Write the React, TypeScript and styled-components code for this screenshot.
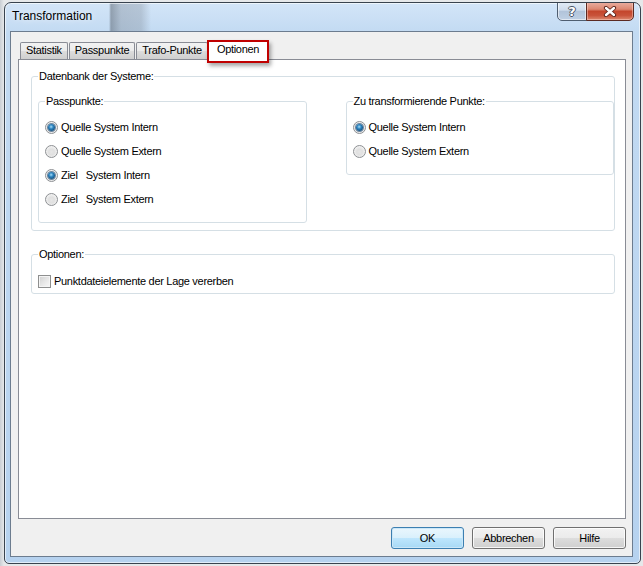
import React from "react";
import styled, { createGlobalStyle, css } from "styled-components";

const Global = createGlobalStyle`
  html, body { margin: 0; padding: 0; }
  body {
    background: #d9dde1;
    font-family: "Liberation Sans", Arial, sans-serif;
    font-size: 11px;
    color: #000;
  }
`;

const Desktop = styled.div`
  width: 643px;
  height: 566px;
  padding: 2px 2px 2px 4px;
  box-sizing: border-box;
  background: linear-gradient(90deg, #c9ced4 0, #e6e8ea 4px);
`;

const Window = styled.div`
  width: 637px;
  height: 562px;
  box-sizing: border-box;
  display: flex;
  flex-direction: column;
  border: 1px solid #39434f;
  border-radius: 7px 7px 5px 5px;
  background:
    linear-gradient(90deg, transparent 104px, rgba(70, 78, 88, 0.45) 106px, rgba(110, 118, 128, 0.32) 116px, rgba(110, 118, 128, 0.28) 136px, transparent 146px) 0 0 / 100% 28px no-repeat,
    linear-gradient(180deg, #d3e5f8 0, #c2daf2 30px, #b6d2ef 100%);
  box-shadow: inset 0 0 0 1px rgba(255, 255, 255, 0.6);
  overflow: hidden;
`;

const TitleBar = styled.div`
  height: 28px;
  flex: none;
  display: flex;
  justify-content: space-between;
  align-items: flex-start;
  padding-left: 7px;
  padding-right: 6px;
`;

const Title = styled.div`
  margin-top: 6px;
  font-size: 12px;
  line-height: 15px;
  color: #000;
  text-shadow: 0 0 6px rgba(255, 255, 255, 0.9);
`;

const Captions = styled.div`
  display: flex;
  margin-top: -2px;
`;

const CaptionButton = styled.div<{ $close?: boolean }>`
  height: 20px;
  box-sizing: border-box;
  display: flex;
  align-items: center;
  justify-content: center;
  border: 1px solid #4f5e70;
  ${(p) =>
    p.$close
      ? css`
          width: 48px;
          margin-left: -1px;
          border-color: #5b2a22;
          border-radius: 0 0 5px 0;
          background: linear-gradient(180deg, #eab0a2 0%, #dc8771 40%, #c4462c 52%, #c9533a 75%, #dc8a70 100%);
          box-shadow: inset 0 0 0 1px rgba(255, 220, 210, 0.45);
        `
      : css`
          width: 30px;
          border-radius: 0 0 0 5px;
          background: linear-gradient(180deg, #e3ecf6 0%, #cfdcec 45%, #b2c4da 52%, #bfd0e4 100%);
          box-shadow: inset 0 0 0 1px rgba(255, 255, 255, 0.55);
        `}
`;

const HelpGlyph = styled.span`
  font-family: "DejaVu Sans", sans-serif;
  font-weight: bold;
  font-size: 13px;
  line-height: 13px;
  color: #fff;
  text-shadow: -1px 0 #4a5566, 1px 0 #4a5566, 0 -1px #4a5566, 0 1px #4a5566;
`;

const Client = styled.div`
  flex: 1;
  margin: 0 7px 6px 5px;
  border: 1px solid #6c7c8f;
  background: #f0f0f0;
  display: flex;
  flex-direction: column;
  padding: 8px 6px 7px 7px;
  min-height: 0;
`;

const TabStrip = styled.div`
  display: flex;
  align-items: flex-end;
  height: 19px;
  padding-left: 2px;
  position: relative;
  z-index: 1;
`;

const Tab = styled.div<{ $active?: boolean }>`
  box-sizing: border-box;
  height: 17px;
  padding: 0 5px;
  line-height: 15px;
  letter-spacing: -0.3px;
  border: 1px solid #898c95;
  border-bottom: none;
  margin-right: 1px;
  background: linear-gradient(180deg, #f2f2f2 0%, #ebebeb 50%, #dddddd 51%, #cfcfcf 100%);
  border-radius: 2px 2px 0 0;
  ${(p) =>
    p.$active &&
    css`
      position: relative;
      height: 20px;
      margin: 0 0 -1px -1px;
      padding: 1px 8px 0;
      background: #fff;
      &::after {
        content: "";
        position: absolute;
        left: -2px;
        right: -2px;
        top: -1px;
        bottom: -3px;
        border: 2px solid #c00000;
        box-shadow: 2px 3px 4px rgba(0, 0, 0, 0.35);
      }
    `}
`;

const Panel = styled.div`
  flex: 1;
  background: #fff;
  border: 1px solid #898c95;
  padding: 10px 10px 0 12px;
  display: flex;
  flex-direction: column;
`;

const Group = styled.fieldset<{ $pad: string }>`
  margin: 0;
  min-width: 0;
  border: 1px solid #d5dfe5;
  border-radius: 3px;
  padding: ${(p) => p.$pad};
`;

const Legend = styled.legend`
  padding: 0 1px;
  font-size: 11px;
  line-height: 13px;
  letter-spacing: -0.3px;
`;

const Columns = styled.div`
  display: grid;
  grid-template-columns: 1fr 1fr;
  column-gap: 39px;
  align-items: start;
`;

const Spacer = styled.div`
  height: 17px;
`;

const OptionRow = styled.div<{ $h: number }>`
  display: flex;
  align-items: center;
  height: ${(p) => p.$h}px;
  white-space: pre;
  letter-spacing: -0.3px;
`;

const Radio = styled.span<{ $checked?: boolean }>`
  width: 13px;
  height: 13px;
  box-sizing: border-box;
  border-radius: 50%;
  border: 1px solid #8d9093;
  background: radial-gradient(circle at 50% 55%, #e6e6e6 0, #e0e0e0 35%, #f7f7f7 80%);
  display: flex;
  align-items: center;
  justify-content: center;
  margin-right: 3px;
  flex: none;
  &::after {
    content: "";
    width: 7px;
    height: 7px;
    border-radius: 50%;
    display: ${(p) => (p.$checked ? "block" : "none")};
    background: radial-gradient(circle at 45% 40%, #a8def7 0, #2f86c2 35%, #14507f 75%, #0c3760 100%);
    box-shadow: 0 0 0 1px rgba(28, 70, 110, 0.6);
  }
`;

const CheckBox = styled.span`
  width: 13px;
  height: 13px;
  box-sizing: border-box;
  border: 1px solid #8e8f8f;
  background: linear-gradient(135deg, #cfcfcf 0%, #e6e6e6 50%, #f8f8f8 100%);
  box-shadow: inset 0 0 0 1px #f4f4f4;
  margin-right: 3px;
  flex: none;
`;

const Footer = styled.div`
  display: flex;
  justify-content: flex-end;
  gap: 8px;
  margin-top: 8px;
`;

const Button = styled.button<{ $default?: boolean }>`
  width: 73px;
  height: 22px;
  box-sizing: border-box;
  font-family: "Liberation Sans", Arial, sans-serif;
  font-size: 11px;
  letter-spacing: -0.3px;
  color: #000;
  padding: 0;
  border: 1px solid #707070;
  border-radius: 3px;
  background: linear-gradient(180deg, #f2f2f2 0%, #ebebeb 50%, #dddddd 51%, #cfcfcf 100%);
  box-shadow: inset 0 0 0 1px rgba(255, 255, 255, 0.8);
  ${(p) =>
    p.$default &&
    css`
      border-color: #3c7fb1;
      background: linear-gradient(180deg, #eaf6fd 0%, #d9f0fc 50%, #bee6fd 51%, #a7d9f5 100%);
      box-shadow: inset 0 0 0 1px #cbe7f8;
    `}
`;

const passpunkte: { label: string; checked: boolean }[] = [
  { label: "Quelle System Intern", checked: true },
  { label: "Quelle System Extern", checked: false },
  { label: "Ziel   System Intern", checked: true },
  { label: "Ziel   System Extern", checked: false },
];

const zuTrafo: { label: string; checked: boolean }[] = [
  { label: "Quelle System Intern", checked: true },
  { label: "Quelle System Extern", checked: false },
];

const CloseX = () => (
  <svg width="14" height="11" viewBox="0 0 14 11">
    <path d="M3 2 L11 9 M11 2 L3 9" stroke="#5a2219" strokeWidth="4.2" strokeLinecap="round" />
    <path d="M3 2 L11 9 M11 2 L3 9" stroke="#ffffff" strokeWidth="2.4" strokeLinecap="round" />
  </svg>
);

export default function App() {
  return (
    <>
      <Global />
      <Desktop>
        <Window>
          <TitleBar>
            <Title>Transformation</Title>
            <Captions>
              <CaptionButton>
                <HelpGlyph>?</HelpGlyph>
              </CaptionButton>
              <CaptionButton $close>
                <CloseX />
              </CaptionButton>
            </Captions>
          </TitleBar>
          <Client>
            <TabStrip>
              <Tab>Statistik</Tab>
              <Tab>Passpunkte</Tab>
              <Tab>Trafo-Punkte</Tab>
              <Tab $active>Optionen</Tab>
            </TabStrip>
            <Panel>
              <Group $pad="12px 0 7px 6px">
                <Legend>Datenbank der Systeme:</Legend>
                <Columns>
                  <Group $pad="7px 6px 11px 6px">
                    <Legend>Passpunkte:</Legend>
                    {passpunkte.map((o) => (
                      <OptionRow key={o.label} $h={24}>
                        <Radio $checked={o.checked} />
                        {o.label}
                      </OptionRow>
                    ))}
                  </Group>
                  <Group $pad="7px 6px 11px 6px">
                    <Legend>Zu transformierende Punkte:</Legend>
                    {zuTrafo.map((o) => (
                      <OptionRow key={o.label} $h={24}>
                        <Radio $checked={o.checked} />
                        {o.label}
                      </OptionRow>
                    ))}
                  </Group>
                </Columns>
              </Group>
              <Spacer />
              <Group $pad="9px 6px 1px 6px">
                <Legend>Optionen:</Legend>
                <OptionRow $h={22}>
                  <CheckBox />
                  Punktdateielemente der Lage vererben
                </OptionRow>
              </Group>
            </Panel>
            <Footer>
              <Button $default>OK</Button>
              <Button>Abbrechen</Button>
              <Button>Hilfe</Button>
            </Footer>
          </Client>
        </Window>
      </Desktop>
    </>
  );
}
